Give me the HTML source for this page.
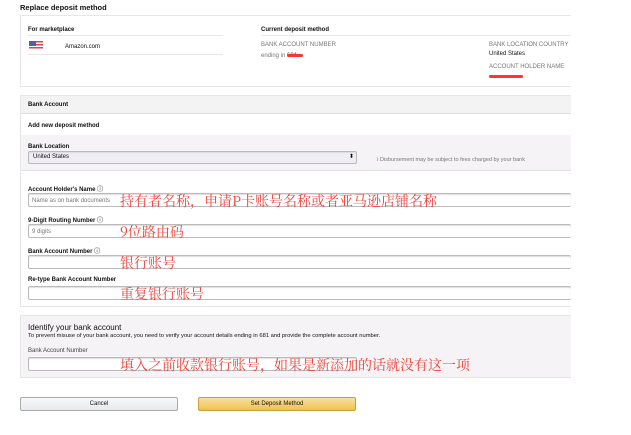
<!DOCTYPE html>
<html><head><meta charset="utf-8"><style>
*{margin:0;padding:0;box-sizing:border-box}
body{width:631px;height:435px;background:#fff;font-family:"Liberation Sans",sans-serif;color:#111;position:relative;overflow:hidden;font-size:6px}
.a{position:absolute;white-space:nowrap}
.b{font-weight:bold}
.box{position:absolute;border:1px solid #e6e6e6}
.in{position:absolute;border:1px solid #bbb;border-radius:2px;background:#fff;box-shadow:inset 0 1px 1px #ddd}
.line{position:absolute;height:1px;background:#e8e8e8}
.red{position:absolute;color:#f0403a;font-family:"Noto Serif CJK SC","Liberation Serif",serif;font-size:14px;white-space:nowrap;line-height:1}
.g{color:#777}
</style></head><body>
<div class="a b" style="left:20px;top:3px;font-size:7.5px">Replace deposit method</div>
<div class="box" style="left:20px;top:15px;width:551px;height:72px;border-right:none"></div>
<div class="a b" style="left:28px;top:27px">For marketplace</div>
<div class="line" style="left:28px;top:35px;width:195px"></div>
<div class="line" style="left:28px;top:54px;width:195px"></div>
<div class="a" style="left:29px;top:41px;width:14px;height:9px;background:repeating-linear-gradient(#e04050 0 1.5px,#fff 1.5px 3px)"><div style="width:7px;height:5px;background:#5060a8"></div></div>
<div class="a" style="left:65px;top:44px">Amazon.com</div>
<div class="a b" style="left:261px;top:27px">Current deposit method</div>
<div class="line" style="left:261px;top:35px;width:310px"></div>
<div class="a g" style="left:261px;top:42px">BANK ACCOUNT NUMBER</div>
<div class="a g" style="left:261px;top:53px">ending in <span style="color:#333">681</span></div>
<div class="a" style="left:287px;top:54px;width:16px;height:3px;background:#f33;border-radius:2px"></div>
<div class="a g" style="left:489px;top:42px">BANK LOCATION COUNTRY</div>
<div class="a" style="left:489px;top:51px">United States</div>
<div class="a g" style="left:489px;top:64px">ACCOUNT HOLDER NAME</div>
<div class="a" style="left:489px;top:75px;width:34px;height:3px;background:#f33;border-radius:2px"></div>

<div class="box" style="left:20px;top:95px;width:551px;height:212px;border-right:none"></div>
<div class="a" style="left:21px;top:96px;width:550px;height:18px;background:#f3f3f3;border-bottom:1px solid #e0e0e0"></div>
<div class="a b" style="left:28px;top:102px">Bank Account</div>
<div class="a b" style="left:28px;top:123px">Add new deposit method</div>
<div class="a" style="left:21px;top:135px;width:550px;height:36px;background:#f5f3f5;border-bottom:1px solid #e0e0e0"></div>
<div class="a b" style="left:28px;top:144px">Bank Location</div>
<div class="in" style="left:28px;top:151px;width:329px;height:13px;background:#eeeef4"></div>
<div class="a" style="left:33px;top:154px">United States</div>
<div class="a" style="left:349px;top:153px;font-size:6px">⬍</div>
<div class="a g" style="left:377px;top:157px;font-size:5.5px">ⅰ Disbursement may be subject to fees charged by your bank</div>

<div class="a b" style="left:28px;top:184px">Account Holder's Name <span class="g">ⓘ</span></div>
<div class="in" style="left:28px;top:193px;width:543px;height:14px;border-right:none"></div>
<div class="a g" style="left:32px;top:198px">Name as on bank documents</div>
<div class="red" style="left:120px;top:194px">持有者名称，申请P卡账号名称或者亚马逊店铺名称</div>
<div class="a b" style="left:28px;top:215px">9-Digit Routing Number <span class="g">ⓘ</span></div>
<div class="in" style="left:28px;top:224px;width:543px;height:14px;border-right:none"></div>
<div class="a g" style="left:32px;top:229px">9 digits</div>
<div class="red" style="left:120px;top:225px">9位路由码</div>
<div class="a b" style="left:28px;top:246px">Bank Account Number <span class="g">ⓘ</span></div>
<div class="in" style="left:28px;top:255px;width:543px;height:14px;border-right:none"></div>
<div class="red" style="left:120px;top:256px">银行账号</div>
<div class="a b" style="left:28px;top:277px">Re-type Bank Account Number</div>
<div class="in" style="left:28px;top:286px;width:543px;height:14px;border-right:none"></div>
<div class="red" style="left:120px;top:287px">重复银行账号</div>

<div class="a" style="left:20px;top:315px;width:551px;height:63px;background:#f5f3f5;border:1px solid #e6e6e6;border-right:none"></div>
<div class="a" style="left:28px;top:323px;font-size:8px">Identify your bank account</div>
<div class="a" style="left:28px;top:333px;font-size:5.8px">To prevent misuse of your bank account, you need to verify your account details ending in 681 and provide the complete account number.</div>
<div class="a" style="left:28px;top:348px;color:#444">Bank Account Number</div>
<div class="in" style="left:28px;top:357px;width:329px;height:14px"></div>
<div class="red" style="left:120px;top:358px">填入之前收款银行账号，如果是新添加的话就没有这一项</div>

<div class="a" style="left:20px;top:397px;width:158px;height:14px;border:1px solid #aaa;border-radius:2px;background:linear-gradient(#f7f8fa,#e7e9ec);text-align:center;line-height:12px">Cancel</div>
<div class="a" style="left:198px;top:397px;width:158px;height:14px;border:1px solid #c8a040;border-radius:2px;background:linear-gradient(#f7dfa5,#f0c14b);text-align:center;line-height:12px">Set Deposit Method</div>
</body></html>
